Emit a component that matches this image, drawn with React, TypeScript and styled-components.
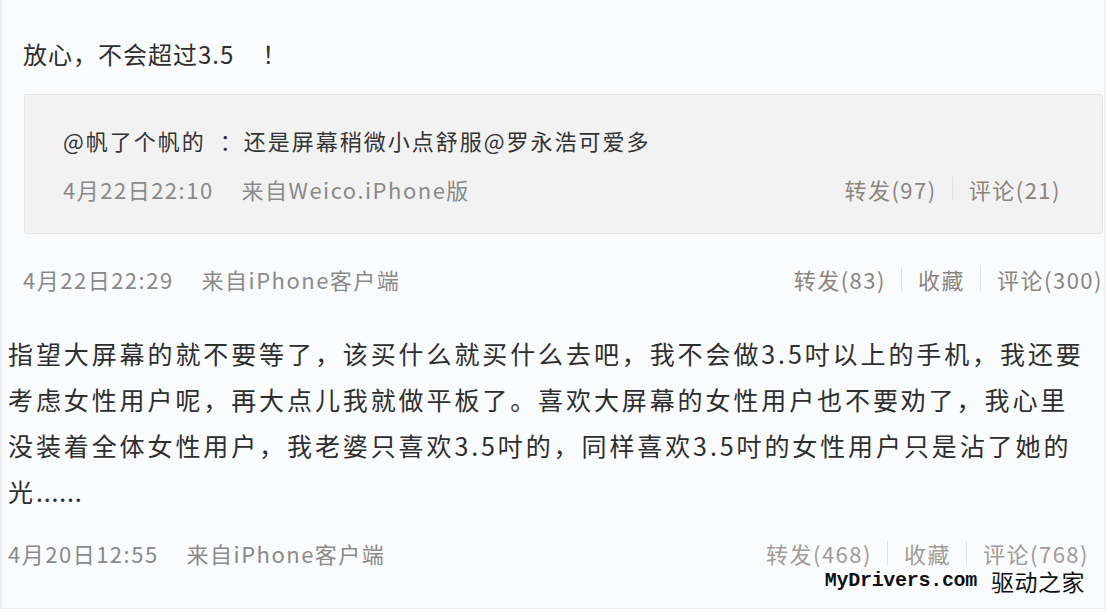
import React from 'react';
import styled, { createGlobalStyle } from 'styled-components';

const GlobalStyle = createGlobalStyle`
  html, body {
    margin: 0;
    padding: 0;
  }
  body {
    background: #fafbfd;
    font-family: "Noto Sans CJK SC", "Microsoft YaHei", sans-serif;
  }
`;

const Page = styled.div`
  position: relative;
  box-sizing: border-box;
  width: 1106px;
  height: 609px;
  border-left: 2px solid #eceef1;
  border-right: 2px solid #eef0f2;
  border-bottom: 1px solid #eceef0;
  overflow: hidden;
`;

const Post = styled.section<{ $indent: number; $top: number; $right: number }>`
  padding: ${p => p.$top}px ${p => p.$right}px 0 ${p => p.$indent}px;
`;

const Title = styled.p`
  margin: 0;
  font-size: 24px;
  line-height: 36px;
  letter-spacing: 1px;
  color: #2e2e2e;
`;

const Bang = styled.span`
  padding-left: 28px;
`;

const QuoteBox = styled.div`
  box-sizing: border-box;
  height: 140px;
  margin: 22px 0 0 1px;
  padding: 29px 41px 0 38px;
  background: #f2f2f2;
  border: 1px solid #e4e4e4;
  border-radius: 3px;
`;

const QuoteText = styled.p`
  margin: 0 0 17px;
  font-size: 22px;
  line-height: 32px;
  letter-spacing: 2px;
  color: #333;
  white-space: pre;
`;

const BodyText = styled.p`
  margin: 0;
  font-size: 25px;
  line-height: 46px;
  letter-spacing: 2.9px;
  color: #2e2e2e;
  white-space: nowrap;
`;

const Dots = styled.span`
  letter-spacing: 0.8px;
`;

const MetaRow = styled.div<{ $gap: number }>`
  display: flex;
  justify-content: space-between;
  align-items: center;
  height: 32px;
  margin-top: ${p => p.$gap}px;
  font-size: 22px;
  line-height: 28px;
  letter-spacing: 1.5px;
  white-space: nowrap;
`;

const MetaInfo = styled.div`
  display: flex;
  gap: 28px;
  color: #8a8a8a;
`;

const Actions = styled.div<{ $faded?: boolean }>`
  display: flex;
  align-items: center;
  color: ${p => (p.$faded ? '#a19c97' : '#8b8580')};
`;

const Divider = styled.span`
  width: 1px;
  height: 24px;
  margin: 0 16px 0 15px;
  background: #e0e0e0;
`;

const Watermark = styled.div`
  position: absolute;
  right: 19px;
  top: 573px;
  display: flex;
  align-items: center;
  gap: 14px;
  line-height: 16px;
  color: #111;
`;

const SiteName = styled.span`
  font-family: "Liberation Mono", "DejaVu Sans Mono", monospace;
  font-size: 20px;
  font-weight: bold;
  letter-spacing: -0.3px;
`;

const SiteCn = styled.span`
  font-size: 23px;
  letter-spacing: 0.5px;
`;

type MetaProps = {
  time: string;
  source: string;
  actions: string[];
  gap: number;
  faded?: boolean;
};

const Meta = ({ time, source, actions, gap, faded }: MetaProps) => (
  <MetaRow $gap={gap}>
    <MetaInfo>
      <span>{time}</span>
      <span>{source}</span>
    </MetaInfo>
    <Actions $faded={faded}>
      {actions.map((a, i) => (
        <React.Fragment key={a}>
          {i > 0 && <Divider />}
          <span>{a}</span>
        </React.Fragment>
      ))}
    </Actions>
  </MetaRow>
);

export default function App() {
  return (
    <>
      <GlobalStyle />
      <Page>
        {/* reply with quoted post */}
        <Post $indent={21} $top={36} $right={1}>
          <Title>
            放心，不会超过3.5<Bang>！</Bang>
          </Title>
          <QuoteBox>
            <QuoteText>{'@帆了个帆的  ：还是屏幕稍微小点舒服@罗永浩可爱多'}</QuoteText>
            <Meta time="4月22日22:10" source="来自Weico.iPhone版" actions={['转发(97)', '评论(21)']} gap={0} />
          </QuoteBox>
          <Meta time="4月22日22:29" source="来自iPhone客户端" actions={['转发(83)', '收藏', '评论(300)']} gap={29} />
        </Post>

        {/* original post */}
        <Post $indent={6} $top={35} $right={15}>
          <BodyText>
            指望大屏幕的就不要等了，该买什么就买什么去吧，我不会做3.5吋以上的手机，我还要
            <br />
            考虑女性用户呢，再大点儿我就做平板了。喜欢大屏幕的女性用户也不要劝了，我心里
            <br />
            没装着全体女性用户，我老婆只喜欢3.5吋的，同样喜欢3.5吋的女性用户只是沾了她的
            <br />
            光<Dots>......</Dots>
          </BodyText>
          <Meta time="4月20日12:55" source="来自iPhone客户端" actions={['转发(468)', '收藏', '评论(768)']} gap={23} faded />
        </Post>

        <Watermark>
          <SiteName>MyDrivers.com</SiteName>
          <SiteCn>驱动之家</SiteCn>
        </Watermark>
      </Page>
    </>
  );
}
